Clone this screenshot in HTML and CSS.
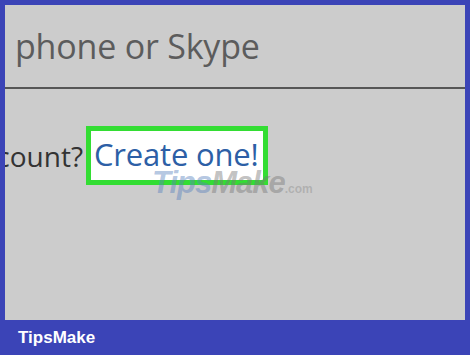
FILE: index.html
```html
<!DOCTYPE html>
<html lang="en">
<head>
    <meta charset="UTF-8">
    <meta name="viewport" content="width=device-width, initial-scale=1.0">
    <title>Sign in - Create one</title>
    <link rel="stylesheet" href="styles.css">
</head>
<body>
    <div class="frame">
        <div class="screen">
            <div class="field">
                <span class="placeholder">phone or Skype</span>
            </div>

            <div class="prompt">
                <div class="lead">
                    <span>No account? No account?</span>
                </div>
                <a class="create-link" href="#">Create one!</a>
            </div>

            <div class="watermark">
                <span class="wm-tips">Tips</span><span class="wm-make">Make</span><span class="wm-com">.com</span>
            </div>
        </div>
        <div class="footer">
            <span class="brand">TipsMake</span>
        </div>
    </div>
</body>
</html>
```

FILE: styles.css
```css
* {
    margin: 0;
    padding: 0;
    box-sizing: border-box;
}

body {
    background: #3b44b7;
    font-family: 'Open Sans', 'Noto Sans', sans-serif;
}

.frame {
    width: 470px;
    height: 355px;
    padding: 5px 5px 0;
    display: flex;
    flex-direction: column;
}

.screen {
    position: relative;
    height: 315px;
    background: #cccccc;
    overflow: hidden;
}

.field {
    height: 84px;
    border-bottom: 2px solid #565656;
    padding: 18px 0 0 10px;
}

.placeholder {
    font-size: 34px;
    color: #5c5c5c;
    letter-spacing: -0.2px;
}

.prompt {
    display: flex;
    align-items: center;
    margin-top: 37px;
}

.lead {
    width: 81px;
    display: flex;
    justify-content: flex-end;
    white-space: nowrap;
    font-size: 28px;
    color: #333;
    padding-right: 3px;
}

.create-link {
    display: block;
    height: 59px;
    width: 182px;
    border: 5px solid #33dd33;
    background: #fff;
    color: #2d5fa6;
    text-decoration: none;
    font-size: 31px;
    line-height: 40px;
    padding: 3px 0 0 3px;
    white-space: nowrap;
    letter-spacing: -0.2px;
}

/* watermark over the link */
.watermark {
    position: absolute;
    left: 147px;
    top: 160px;
    font-family: 'Liberation Sans', Arial, sans-serif;
    font-weight: bold;
    font-style: italic;
    font-size: 31px;
    letter-spacing: -1px;
    pointer-events: none;
}

.wm-tips {
    color: rgba(90, 130, 190, 0.45);
}

.wm-make {
    color: rgba(120, 120, 120, 0.45);
}

.wm-com {
    font-size: 12px;
    font-style: normal;
    letter-spacing: 0;
    color: rgba(140, 140, 140, 0.45);
}

.footer {
    flex: 1;
    display: flex;
    align-items: center;
    padding-left: 13px;
}

.brand {
    color: #fff;
    font-family: 'Liberation Sans', Arial, sans-serif;
    font-weight: bold;
    font-size: 17px;
}
```
